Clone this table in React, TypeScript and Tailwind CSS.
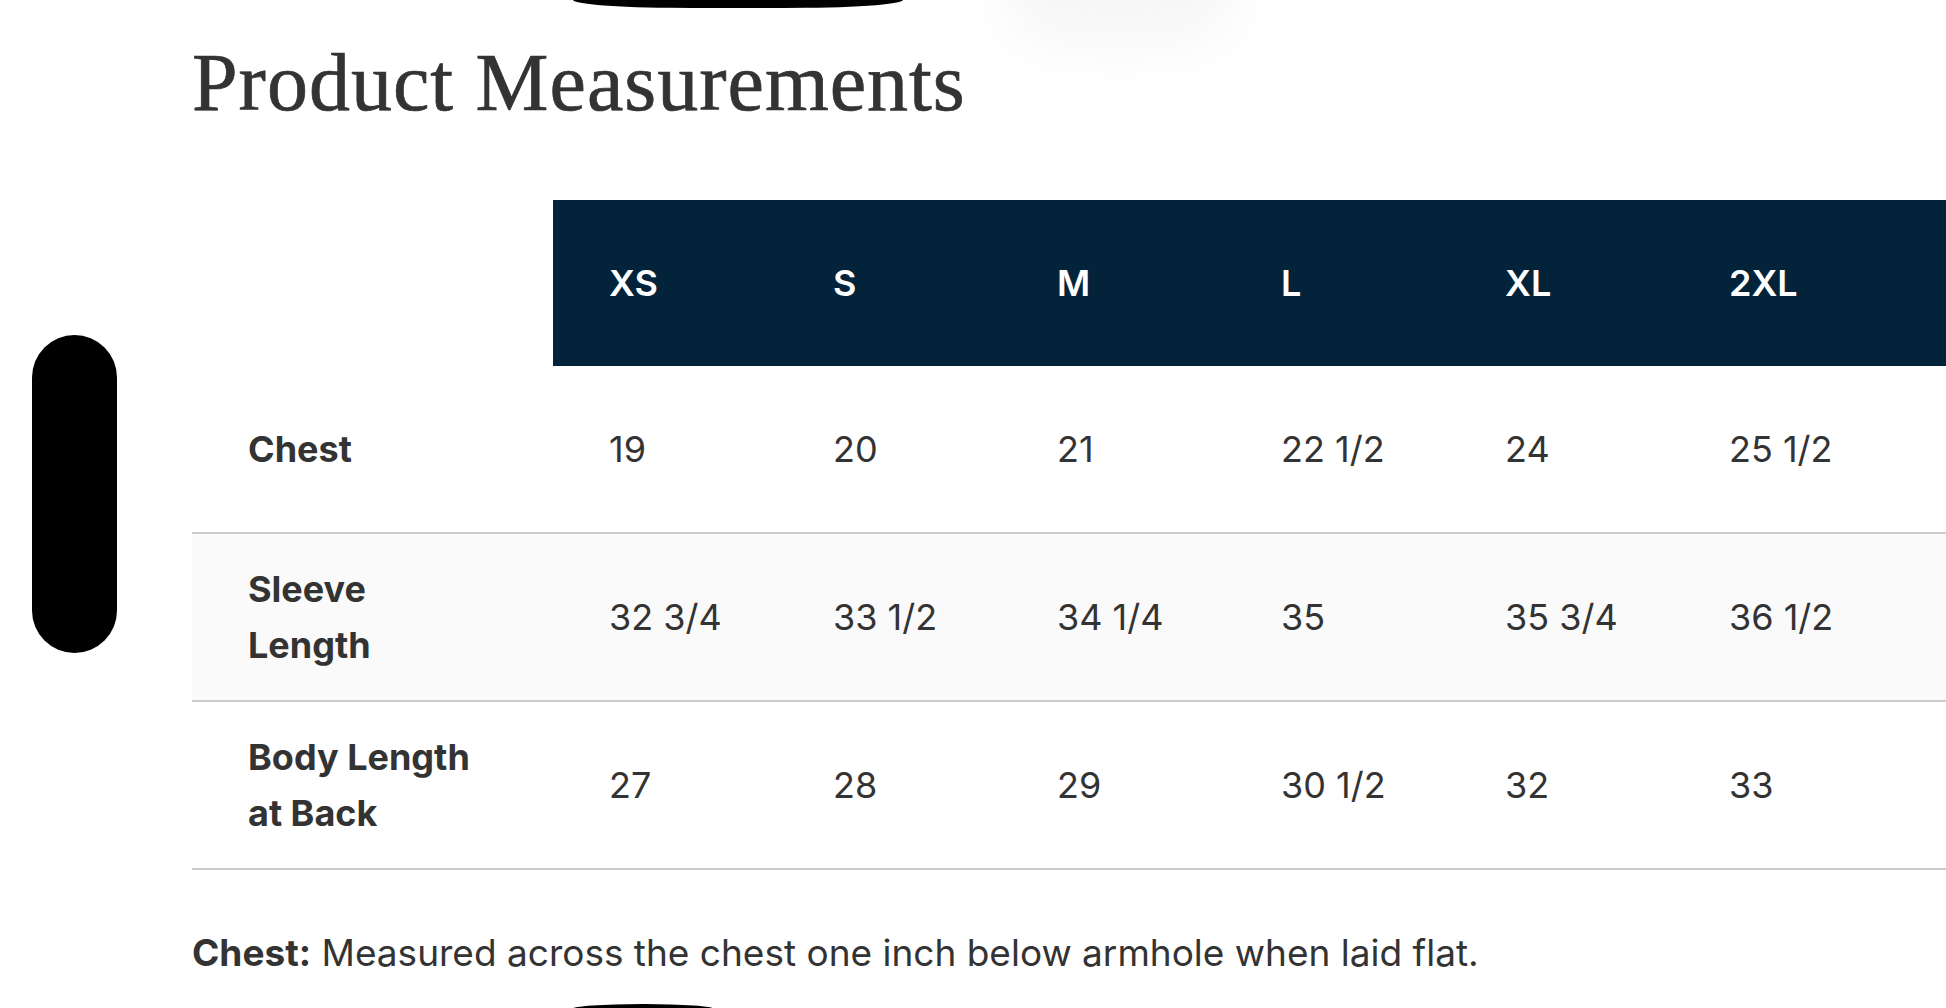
import React from "react";

const sizes = ["XS", "S", "M", "L", "XL", "2XL"];

const rows: { label: string[]; values: string[]; shaded?: boolean }[] = [
    { label: ["Chest"], values: ["19", "20", "21", "22 1/2", "24", "25 1/2"] },
    { label: ["Sleeve", "Length"], values: ["32 3/4", "33 1/2", "34 1/4", "35", "35 3/4", "36 1/2"], shaded: true },
    { label: ["Body Length", "at Back"], values: ["27", "28", "29", "30 1/2", "32", "33"] },
];

const App: React.FC = () => {
    return (
        <div className="relative w-[1946px] h-[1008px] overflow-hidden bg-white text-[#333333] font-['Inter','Liberation_Sans',sans-serif]">
            {/* faint blur at top */}
            <div className="absolute left-[1000px] top-[-90px] w-[240px] h-[140px] rounded-full bg-[#f7f7f7] blur-xl" />
            {/* black shapes around the edges */}
            <div className="absolute left-[573px] top-0 w-[330px] h-[8px] bg-black rounded-bl-[120px_8px] rounded-br-[120px_8px]" />
            <div className="absolute left-[572px] top-[1004px] w-[142px] h-[10px] bg-black rounded-tl-[70px_5px] rounded-tr-[70px_5px]" />
            <div className="absolute left-[32px] top-[335px] w-[85px] h-[318px] bg-black rounded-full" />

            <div className="relative pl-[192px] pt-[43px]">
                <h1 className="font-['Liberation_Serif',serif] text-[82px] leading-[80px] tracking-[1px] text-[#333333] whitespace-nowrap [-webkit-text-stroke:0.7px_#333333]">
                    Product Measurements
                </h1>

                <div className="mt-[77px] grid grid-cols-[361px_repeat(6,224px)_1fr]">
                    <div className="h-[166px]" />
                    {sizes.map((s) => (
                        <div
                            key={s}
                            className="h-[166px] bg-[#03233a] flex items-center pl-[56px] text-white text-[36px] font-semibold"
                        >
                            {s}
                        </div>
                    ))}
                    <div className="h-[166px] bg-[#03233a]" />

                    {rows.map((r) => (
                        <React.Fragment key={r.label.join(" ")}>
                            <div
                                className={`h-[168px] border-b-2 border-[#cccccc] flex flex-col justify-center pl-[56px] text-[36px] leading-[56px] font-bold ${r.shaded ? "bg-[#fafafa]" : "bg-white"}`}
                            >
                                {r.label.map((l) => (
                                    <span key={l}>{l}</span>
                                ))}
                            </div>
                            {r.values.map((v, i) => (
                                <div
                                    key={i}
                                    className={`h-[168px] border-b-2 border-[#cccccc] flex items-center pl-[56px] text-[36px] whitespace-nowrap ${r.shaded ? "bg-[#fafafa]" : "bg-white"}`}
                                >
                                    {v}
                                </div>
                            ))}
                            <div className={`h-[168px] border-b-2 border-[#cccccc] ${r.shaded ? "bg-[#fafafa]" : "bg-white"}`} />
                        </React.Fragment>
                    ))}
                </div>

                <p className="mt-[56px] text-[37px] leading-[54px] whitespace-nowrap">
                    <span className="font-bold">Chest:</span> Measured across the chest one inch below armhole when laid flat.
                </p>
            </div>
        </div>
    );
};

export default App;
